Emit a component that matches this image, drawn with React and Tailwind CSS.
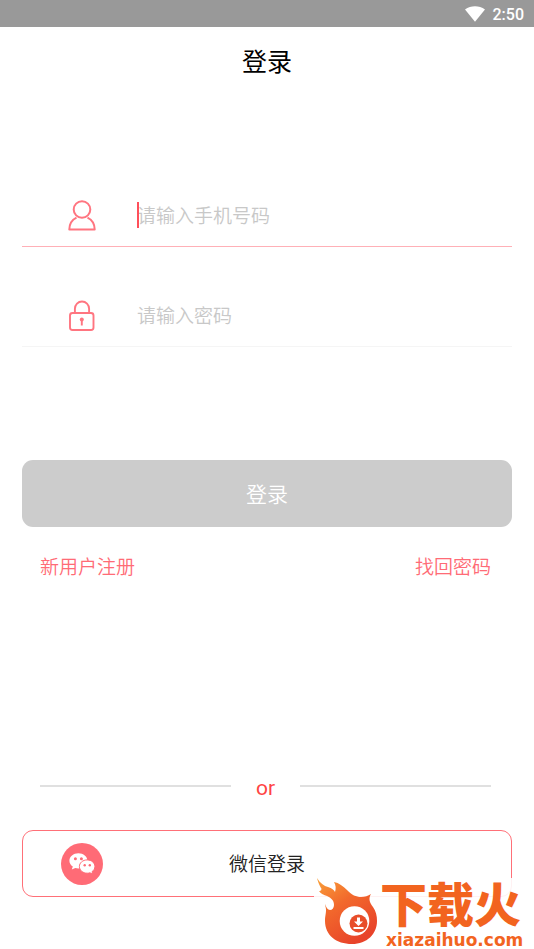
function UserIcon() {
  return (
    <svg viewBox="0 0 28 31" className="h-[31px] w-7" fill="none" stroke="#ff7580" strokeWidth="2" strokeLinejoin="round">
      <circle cx="14" cy="9.5" r="8.3" />
      <path d="M8.500 17.600C4 19.800 1.400 24 1.300 29.400h25.400c-.1-5.400-2.700-9.600-7.200-11.800" />
    </svg>
  );
}

function LockIcon() {
  return (
    <svg viewBox="0 0 28 32" className="h-8 w-7" fill="none" stroke="#ff7580" strokeWidth="1.9">
      <path d="M6.900 14V9.800a7.100 7.300 0 0 1 14.200 0V14" />
      <rect x="2" y="14" width="23.500" height="17" rx="2.500" />
      <circle cx="13.800" cy="20.500" r="2" fill="#ff7580" stroke="none" />
      <path d="M13.800 20.500v6" />
    </svg>
  );
}

function WechatIcon() {
  return (
    <svg viewBox="0 0 42 42" className="size-[42px] shrink-0">
      <circle cx="21" cy="21" r="21" fill="#ff6b76" />
      <path d="M17.400 10.200c-5 0-9 3.300-9 7.500 0 2.400 1.300 4.500 3.400 5.900l-1 3 3.500-1.700c1 .3 2 .5 3.100.5 5 0 9-3.400 9-7.700s-4-7.500-9-7.500Z" fill="#fff" />
      <path d="M26.200 16.900c-4.400 0-7.800 2.900-7.800 6.600s3.400 6.700 7.800 6.700c1 0 1.900-.1 2.800-.4l2.800 1.500-.8-2.600c1.800-1.200 2.900-3.100 2.900-5.200 0-3.700-3.400-6.600-7.700-6.600Z" fill="#fff" stroke="#ff6b76" strokeWidth="1" />
      <g fill="#ff6b76">
        <circle cx="14.400" cy="15.800" r="1.500" />
        <circle cx="20.400" cy="15.800" r="1.500" />
        <circle cx="23.700" cy="22.200" r="1.200" />
        <circle cx="28.800" cy="22.200" r="1.200" />
      </g>
    </svg>
  );
}

function FlameLogo() {
  return (
    <svg viewBox="0 0 64 70" className="h-[70px] w-16 shrink-0">
      <defs>
        <linearGradient id="flame" x1="0" y1="0" x2="0.6" y2="1">
          <stop offset="0" stopColor="#f9a13a" />
          <stop offset="0.45" stopColor="#f2692c" />
          <stop offset="1" stopColor="#e8432a" />
        </linearGradient>
      </defs>
      <path
        d="M3 0C6 5 10 8 14 9c4 1 6 3 7 5 1-3 1-7-1-10 5 1 9 4 13 8 5 5 9 7 14 7 4 0 7-1 10-3-3 5-1 9 2 13 3 4 4 9 4 14 0 13-10 23-25 23-16 0-27-9-27-23 0-5 1-7 1-11 0-3-1-4-1-6 1 3 3 6 5 6s4-2 4-5c0-5-3-7-7-9-3-1-6-2-8-5 2 0 3-1 2-4C9 13 5 8 3 0Z"
        fill="url(#flame)"
      />
      <circle cx="40.500" cy="43" r="14.800" fill="#fff" />
      <circle cx="44.500" cy="45.500" r="9" fill="#e84e2a" />
      <path d="M43 39.500h3v4h3l-4.500 4.500-4.500-4.500h3ZM39.500 49h10v2h-10Z" fill="#fff" />
    </svg>
  );
}

function Watermark() {
  return (
    <div className="absolute right-0 bottom-0 flex h-[71px] w-[220px] bg-white/90 text-[#f2641f]">
      <FlameLogo />
      <div className="flex flex-col justify-between whitespace-nowrap">
        <span className="pl-[2px] font-['Noto_Sans_CJK_SC',sans-serif] text-[47px] leading-[48px] font-black">下载火</span>
        <span className="pl-2 font-['DejaVu_Sans',sans-serif] text-[17px] leading-[18px] font-bold">xiazaihuo.com</span>
      </div>
    </div>
  );
}

export default function App() {
  return (
    <div className="relative flex min-h-screen flex-col bg-white font-[Roboto,'Noto_Sans_CJK_SC',sans-serif]">
      {/* Status bar */}
      <div className="flex h-[27px] items-center justify-end gap-2 bg-[#999] pr-[10px] text-white">
        <svg viewBox="0 0 20 16" className="h-4 w-5" fill="#fff">
          <path d="M0 3.500C6-.7 14-.7 20 3.500L10 15.800Z" />
        </svg>
        <span className="pt-[2px] text-base leading-5 font-medium">2:50</span>
      </div>

      <header className="flex h-[68px] items-center justify-center pt-1">
        <h1 className="text-[25px] text-black">登录</h1>
      </header>

      <main className="px-[22px] pt-[89px]">
        <form>
          <label className="flex h-[63px] items-center border-b border-[#ffb0b7] pl-[46px]">
            <UserIcon />
            <span className="relative ml-[41px] flex flex-1 items-center">
              <input
                type="tel"
                aria-label="手机号码"
                placeholder="请输入手机号码"
                className="w-full pt-1 text-[19px] leading-7 font-[350] outline-none placeholder:text-[#c8c8c8]"
              />
              <span className="absolute left-0 h-[26px] w-[2px] bg-[#ff4f5a]" />
            </span>
          </label>

          <label className="mt-[37px] flex h-[63px] items-center border-b border-[#f5f5f5] pl-[46px]">
            <LockIcon />
            <input
              type="password"
              aria-label="密码"
              placeholder="请输入密码"
              className="ml-[41px] flex-1 pt-1 text-[19px] leading-7 font-[350] outline-none placeholder:text-[#c8c8c8]"
            />
          </label>

          <button type="button" className="mt-[113px] h-[67px] w-full rounded-[11px] bg-[#ccc] pt-1 text-[21px] font-[350] text-white">
            登录
          </button>
        </form>

        <div className="mt-6 flex justify-between pt-1 pr-[21px] pl-[18px] text-[19px] leading-[26px] font-[350] text-[#ff6b76]">
          <a href="#register">新用户注册</a>
          <a href="#password">找回密码</a>
        </div>

        {/* Divider */}
        <div className="mt-[190px] flex items-center pr-[21px] pl-[18px]">
          <span className="h-[2px] flex-1 bg-[#e0e0e0]" />
          <span className="w-[69px] pt-1 text-center text-[21px] leading-[26px] text-[#ff4444]">or</span>
          <span className="h-[2px] flex-1 bg-[#e0e0e0]" />
        </div>

        <button
          type="button"
          className="mt-[29px] flex h-[67px] w-full items-center rounded-[11px] border border-[#ff7078] px-[38px] text-[19px] font-[350] text-[#222]"
        >
          <WechatIcon />
          <span className="flex-1 pt-1 pr-[42px] text-center">微信登录</span>
        </button>
      </main>

      <Watermark />
    </div>
  );
}
